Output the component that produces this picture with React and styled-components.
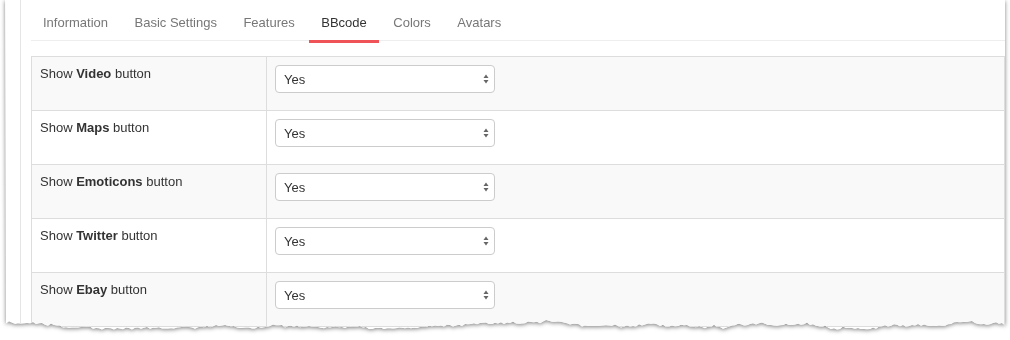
import React from "react";
import styled, { createGlobalStyle } from "styled-components";

const GlobalStyle = createGlobalStyle`
  html, body { margin: 0; padding: 0; background: #fff; overflow: hidden; }
  body { font-family: "Liberation Sans", Arial, sans-serif; font-size: 13px; color: #333; }
`;

// deterministic torn-paper bottom edge
function tornEdge(width, base) {
  let seed = 11;
  const rnd = () => {
    seed = (seed * 9301 + 49297) % 233280;
    return seed / 233280;
  };
  const pts = [];
  let drift = 0;
  for (let x = width; x >= 0; x -= 3) {
    drift += (rnd() - 0.5) * 2.4;
    drift = Math.max(-5, Math.min(5, drift)) * 0.98;
    const jitter = (rnd() - 0.5) * 2;
    const y = base + drift + jitter;
    pts.push(`${x}px ${y.toFixed(1)}px`);
  }
  return `polygon(0 -20px, ${width}px -20px, ${pts.join(", ")})`;
}

const CLIP = tornEdge(1000, 324);

const Shadow = styled.div`
  filter: drop-shadow(0 1px 2px rgba(0, 0, 0, 0.5));
  padding-left: 5px;
  height: 340px;
  overflow: hidden;
`;

const Card = styled.div`
  width: 1000px;
  height: 340px;
  background: #fff;
  clip-path: ${CLIP};
  display: flex;
  overflow: hidden;
`;

const Panel = styled.div`
  margin-left: 15px;
  border-left: 1px solid #e6e6e6;
  padding-left: 10px;
  flex: 1;
  display: flex;
  flex-direction: column;
`;

const TabList = styled.ul`
  list-style: none;
  margin: 0;
  padding: 0;
  display: flex;
  flex-shrink: 0;
  height: 40px;
  border-bottom: 1px solid #eee;
`;

const Tab = styled.li`
  position: relative;
  padding: 15px 12px 0;
  margin-right: 2.5px;
  color: ${(p) => (p.$active ? "#333" : "#777")};
  font-size: 13px;
  line-height: 16px;
  &::after {
    content: "";
    display: ${(p) => (p.$active ? "block" : "none")};
    position: absolute;
    left: 0;
    right: 0;
    top: 40px;
    height: 3px;
    background: #ef5358;
  }
`;

const Table = styled.table`
  flex-shrink: 0;
  margin-top: 15px;
  width: 974px;
  border-collapse: collapse;
  border: 1px solid #ddd;
`;

const Row = styled.tr`
  background: ${(p) => (p.$striped ? "#f9f9f9" : "#fff")};
`;

const FillerRow = styled.tr`
  height: 40px;
  background: #fff;
`;

const LabelCell = styled.td`
  width: 218px;
  padding: 8px;
  border: 1px solid #ddd;
  vertical-align: top;
  line-height: 18px;
  font-size: 13px;
  color: #333;
`;

const FieldCell = styled.td`
  padding: 8px;
  border: 1px solid #ddd;
  vertical-align: top;
`;

const SelectWrap = styled.div`
  position: relative;
  width: 220px;
  height: 28px;
  margin-bottom: 9px;
`;

const Select = styled.select`
  appearance: none;
  -webkit-appearance: none;
  width: 100%;
  height: 100%;
  box-sizing: border-box;
  border: 1px solid #ccc;
  border-radius: 4px;
  background: #fff;
  padding: 0 20px 0 8px;
  font-family: "Liberation Sans", Arial, sans-serif;
  font-size: 13px;
  color: #333;
  outline: none;
`;

const Arrows = styled.svg`
  position: absolute;
  right: 6px;
  top: 9px;
  pointer-events: none;
`;

const rows = ["Video", "Maps", "Emoticons", "Twitter", "Ebay"];
const tabs = ["Information", "Basic Settings", "Features", "BBcode", "Colors", "Avatars"];

export default function App() {
  return (
    <>
      <GlobalStyle />
      <Shadow>
        <Card>
          <Panel>
            <TabList>
              {tabs.map((t) => (
                <Tab key={t} $active={t === "BBcode"}>
                  {t}
                </Tab>
              ))}
            </TabList>
            <Table>
              <tbody>
                {rows.map((r, i) => (
                  <Row key={r} $striped={i % 2 === 0}>
                    <LabelCell>
                      Show <b>{r}</b> button
                    </LabelCell>
                    <FieldCell>
                      <SelectWrap>
                        <Select defaultValue="Yes">
                          <option>Yes</option>
                          <option>No</option>
                        </Select>
                        <Arrows width="6" height="10" viewBox="0 0 6 10">
                          <path d="M3 0.5 L5.5 4 L0.5 4 Z" fill="#666" />
                          <path d="M3 9.5 L5.5 6 L0.5 6 Z" fill="#666" />
                        </Arrows>
                      </SelectWrap>
                    </FieldCell>
                  </Row>
                ))}
                <FillerRow>
                  <LabelCell />
                  <FieldCell />
                </FillerRow>
              </tbody>
            </Table>
          </Panel>
        </Card>
      </Shadow>
    </>
  );
}
